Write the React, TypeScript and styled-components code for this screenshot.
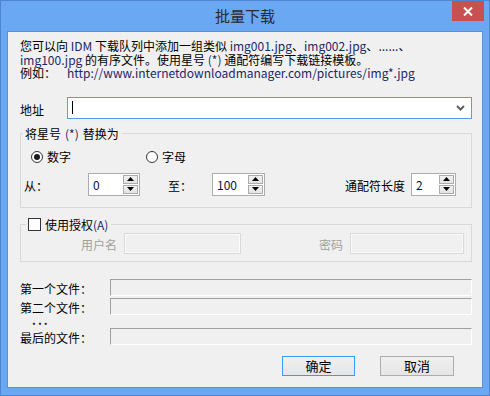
import React from 'react'
import styled, { createGlobalStyle } from 'styled-components'

const GlobalStyle = createGlobalStyle`
  html, body {
    margin: 0;
    padding: 0;
  }
  body {
    font-family: 'Noto Sans CJK SC', 'Noto Sans', sans-serif;
    font-size: 12px;
    color: #000;
  }
  * {
    box-sizing: border-box;
  }
`

const Window = styled.div`
  width: 490px;
  height: 396px;
  border: 1px solid #4d86cf;
  background: #6aa8f3;
  padding: 0 6px 7px;
  display: flex;
  flex-direction: column;
`

const TitleBar = styled.div`
  height: 30px;
  display: grid;
  grid-template-columns: 1fr auto 1fr;
  align-items: center;
`

const Title = styled.div`
  grid-column: 2;
  font-size: 15px;
  line-height: 30px;
  color: #2b2b2b;
`

const CloseButton = styled.div`
  grid-column: 3;
  justify-self: end;
  align-self: start;
  width: 32px;
  height: 20px;
  margin-right: -1px;
  background: #c75050;
  display: flex;
  align-items: center;
  justify-content: center;
`

const Body = styled.div`
  flex: 1;
  border: 1px solid #5b8fd6;
  background: #f0f0f0;
  padding: 7px 10px 0 12px;
  display: flex;
  flex-direction: column;
`

const Description = styled.div`
  line-height: 13.5px;
  white-space: nowrap;
`

const Latin = styled.span`
  color: #1d2766;
`

const Lead = styled.span<{ $w: number }>`
  display: inline-block;
  width: ${({ $w }) => $w}px;
`

const AddressRow = styled.div`
  margin-top: 17px;
  display: flex;
  align-items: center;
  height: 22px;
`

const FieldLabel = styled.div<{ $w: number; $disabled?: boolean; $right?: boolean }>`
  width: ${({ $w }) => $w}px;
  flex: none;
  padding-top: 3px;
  color: ${({ $disabled }) => ($disabled ? '#a0a0a0' : '#000')};
  text-align: ${({ $right }) => ($right ? 'right' : 'left')};
  white-space: nowrap;
`

const Combo = styled.div`
  flex: 1;
  height: 22px;
  border: 1px solid #569de5;
  background: #fff;
  display: flex;
  align-items: center;
  padding: 0 6px 0 4px;
`

const Caret = styled.span`
  width: 1px;
  height: 13px;
  background: #000;
`

const Chevron = styled.svg`
  margin-left: auto;
`

const Group = styled.fieldset<{ $top: number; $bottom: number }>`
  margin: ${({ $top }) => $top}px 0 0;
  padding: 0 0 ${({ $bottom }) => $bottom}px;
  min-width: 0;
  border: 1px solid #d9d9d9;
`

const Legend = styled.legend<{ $left: number }>`
  margin-left: ${({ $left }) => $left}px;
  padding: 0 3px 0 2px;
  line-height: 14px;
  display: flex;
  align-items: center;
  gap: 4px;
`

const RadioRow = styled.div`
  margin-top: 9px;
  padding-left: 10px;
  display: flex;
  height: 14px;
  align-items: center;
`

const RadioOption = styled.label<{ $w?: number }>`
  display: flex;
  align-items: center;
  gap: 4px;
  width: ${({ $w }) => ($w ? `${$w}px` : 'auto')};
`

const RadioCircle = styled.span<{ $checked?: boolean }>`
  width: 12px;
  height: 12px;
  border-radius: 50%;
  border: 1px solid #333;
  background: #fff;
  display: flex;
  align-items: center;
  justify-content: center;
  &::after {
    content: '';
    width: 6px;
    height: 6px;
    border-radius: 50%;
    background: ${({ $checked }) => ($checked ? '#1a1a1a' : 'transparent')};
  }
`

const CheckBox = styled.span`
  width: 13px;
  height: 13px;
  border: 1px solid #333;
  background: #fff;
`

const SpinRow = styled.div`
  margin-top: 9px;
  padding: 0 15px 0 3px;
  display: flex;
  align-items: center;
  height: 23px;
`

const Spacer = styled.div`
  flex: 1;
`

const Spin = styled.div<{ $w: number }>`
  width: ${({ $w }) => $w}px;
  height: 23px;
  border: 1px solid #abadb3;
  background: #fff;
  display: flex;
  padding: 1px;
`

const SpinValue = styled.div`
  flex: 1;
  padding: 2px 0 0 3px;
  line-height: 16px;
  color: #101040;
`

const SpinButtons = styled.div`
  width: 15px;
  display: flex;
  flex-direction: column;
  gap: 1px;
`

const SpinButton = styled.div`
  flex: 1;
  border: 1px solid #acacac;
  background: linear-gradient(#f2f2f2, #e3e3e3);
  display: flex;
  align-items: center;
  justify-content: center;
`

const AuthRow = styled.div`
  margin-top: 1px;
  display: flex;
  align-items: center;
  padding-right: 7px;
`

const DisabledInput = styled.div<{ $w: number }>`
  width: ${({ $w }) => $w}px;
  height: 21px;
  border: 1px solid #d9d9d9;
  box-shadow: inset 0 0 0 1px #fbfbfb;
  background: #f0f0f0;
  margin-left: 7px;
`

const FileList = styled.div`
  margin-top: 17px;
  display: flex;
  flex-direction: column;
  gap: 2px;
`

const FileRow = styled.div`
  display: flex;
  align-items: center;
  height: 17px;
`

const FileField = styled.div`
  flex: 1;
  height: 17px;
  border-top: 1px solid #a0a0a0;
  border-left: 1px solid #a0a0a0;
  border-right: 1px solid #fff;
  border-bottom: 1px solid #fff;
`

const Dots = styled.div`
  height: 9px;
  padding-left: 12px;
  line-height: 6px;
  letter-spacing: 2px;
  color: #202020;
  font-weight: bold;
`

const ButtonRow = styled.div`
  margin-top: 11px;
  display: flex;
  justify-content: flex-end;
  gap: 25px;
  padding-right: 18px;
`

const Button = styled.div<{ $w: number; $default?: boolean }>`
  width: ${({ $w }) => $w}px;
  height: 20px;
  border: 1px solid ${({ $default }) => ($default ? '#3c9bf0' : '#adadad')};
  background: linear-gradient(#f0f0f0, #e5e5e5);
  display: flex;
  align-items: center;
  justify-content: center;
  font-size: 13px;
`

const Arrow = ({ up }: { up?: boolean }) => (
  <svg width="7" height="4" viewBox="0 0 7 4">
    <path d={up ? 'M0 4 L3.5 0 L7 4 Z' : 'M0 0 L3.5 4 L7 0 Z'} fill="#000" />
  </svg>
)

const SpinBox = ({ value, width }: { value: string; width: number }) => (
  <Spin $w={width}>
    <SpinValue>{value}</SpinValue>
    <SpinButtons>
      <SpinButton>
        <Arrow up />
      </SpinButton>
      <SpinButton>
        <Arrow />
      </SpinButton>
    </SpinButtons>
  </Spin>
)

export default function App() {
  return (
    <>
      <GlobalStyle />
      <Window>
        <TitleBar>
          <Title>批量下载</Title>
          <CloseButton>
            <svg width="10" height="9" viewBox="0 0 10 9">
              <path d="M1 0.5 L9 8.5 M9 0.5 L1 8.5" stroke="#fff" strokeWidth="2" />
            </svg>
          </CloseButton>
        </TitleBar>
        <Body>
          <Description>
            <div>
              您可以向 <Latin>IDM</Latin> 下载队列中添加一组类似 <Latin>img001.jpg</Latin>、<Latin>img002.jpg</Latin>、<Latin>......</Latin>、
            </div>
            <div>
              <Latin>img100.jpg</Latin> 的有序文件。使用星号 <Latin>(*)</Latin> 通配符编写下载链接模板。
            </div>
            <div>
              <Lead $w={47}>例如：</Lead>
              <Latin>http://www.internetdownloadmanager.com/pictures/img*.jpg</Latin>
            </div>
          </Description>

          <AddressRow>
            <FieldLabel $w={47}>地址</FieldLabel>
            <Combo>
              <Caret />
              <Chevron width="9" height="6" viewBox="0 0 9 6">
                <path d="M1 1 L4.5 4.5 L8 1" stroke="#606060" strokeWidth="2" fill="none" />
              </Chevron>
            </Combo>
          </AddressRow>

          <Group $top={8} $bottom={11}>
            <Legend $left={2}>
              将星号 <Latin>(*)</Latin> 替换为
            </Legend>
            <RadioRow>
              <RadioOption $w={115}>
                <RadioCircle $checked />
                数字
              </RadioOption>
              <RadioOption>
                <RadioCircle />
                字母
              </RadioOption>
            </RadioRow>
            <SpinRow>
              <FieldLabel $w={64}>从：</FieldLabel>
              <SpinBox value="0" width={52} />
              <FieldLabel $w={44} style={{ marginLeft: 28 }}>
                至：
              </FieldLabel>
              <SpinBox value="100" width={53} />
              <Spacer />
              <FieldLabel $w={66}>通配符长度</FieldLabel>
              <SpinBox value="2" width={45} />
            </SpinRow>
          </Group>

          <Group $top={10} $bottom={7}>
            <Legend $left={5}>
              <CheckBox />
              <span>
                使用授权<Latin>(A)</Latin>
              </span>
            </Legend>
            <AuthRow>
              <FieldLabel $w={96} $disabled $right>
                用户名
              </FieldLabel>
              <DisabledInput $w={117} />
              <Spacer />
              <FieldLabel $w={30} $disabled $right>
                密码
              </FieldLabel>
              <DisabledInput $w={114} />
            </AuthRow>
          </Group>

          <FileList>
            <FileRow>
              <FieldLabel $w={90}>第一个文件：</FieldLabel>
              <FileField />
            </FileRow>
            <FileRow>
              <FieldLabel $w={90}>第二个文件：</FieldLabel>
              <FileField />
            </FileRow>
            <Dots>...</Dots>
            <FileRow>
              <FieldLabel $w={90}>最后的文件：</FieldLabel>
              <FileField />
            </FileRow>
          </FileList>

          <ButtonRow>
            <Button $w={73} $default>
              确定
            </Button>
            <Button $w={74}>取消</Button>
          </ButtonRow>
        </Body>
      </Window>
    </>
  )
}
